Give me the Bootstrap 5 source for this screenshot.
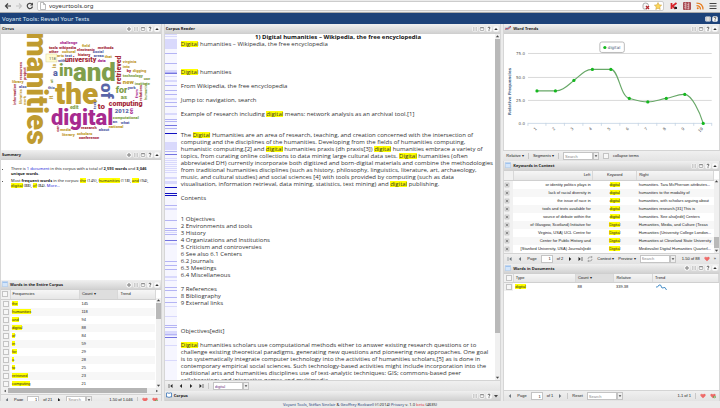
<!DOCTYPE html>
<html lang="en">
<head>
<meta charset="utf-8">
<meta name="viewport" content="width=device-width, initial-scale=1">
<title>Voyant Tools: Reveal Your Texts</title>
<link href="https://cdn.jsdelivr.net/npm/bootstrap@5.3.0/dist/css/bootstrap.min.css" rel="stylesheet">
<style>
body{font:4px/8px "Liberation Sans",Arial,sans-serif;color:#222;background:#ebebeb}
svg{display:block}
a{text-decoration:none;color:#2020d8}
button{background:none;border:0;padding:0;color:inherit;font:inherit;line-height:8px;white-space:nowrap}
input{font:inherit;color:inherit;min-width:0}
input[type=checkbox]{appearance:none;width:6px;height:6px;border:1px solid #c4c4c4;background:#f7f7f7;display:block;margin:1px auto}
.chrome-bar{height:13px;background:#ececec;padding:1px 3px 2px 4px;border-bottom:1px solid #aaa;gap:3px}
.chrome-bar svg,.omnibox svg{width:8px;height:8px;flex:none}
.addons{gap:5px;margin-left:3px}
.omnibox{background:#fff;border:1px solid #ccc;border-radius:2px;height:10px;padding:0 1px}
.omnibox input{border:0;background:none;padding:0;height:8px;font:6px/8px "Noto Sans",sans-serif;color:#333;outline:0;margin-left:-2px}
.brand-bar{height:11px;background:#1d4279;color:#dfe9f5;padding:0 2px;font:6px/10px "Noto Sans",sans-serif}
.workspace{gap:2px}
.col-a{flex:162 1 0}.col-b{flex:338 1 0}.col-c{flex:217 1 0}
.col-a,.col-b,.col-c{min-width:0;min-height:0}
.h-trend{flex:126 1 0;min-height:0}.h-sum{flex:130 1 0;min-height:0}.h-words{flex:121 1 0;min-height:0}.h-docs{flex:137 1 0;min-height:0}.h-read{flex:1 1 0;min-height:0}
.panel{border:solid #d6d6d6;border-width:0 1px;background:#fff;overflow:hidden}
.phead{height:10px;flex:none;background:linear-gradient(#f0f0f0,#d2d2d2);border-bottom:1px solid #cfcfcf;padding:0 1px;color:#222}
.phead h2{font:bold 4px/9px "Noto Sans",sans-serif;margin:0 auto 0 0;white-space:nowrap}
.phead h2 svg{display:inline-block;width:6px;height:6px;margin-right:2px;vertical-align:-1px}
.tools{gap:1px}
.tools svg{width:6px;height:6px}
.tbar{height:11px;flex:none;background:linear-gradient(#f0f0f0,#e3e3e3);border-top:1px solid #d4d4d4;padding:0 3px;gap:4px;white-space:nowrap;overflow:hidden}
.tbar svg{width:6px;height:6px;flex:none}
.tbar input[type=text]{border:1px solid #c4c4c4;background:#fff;height:8px;padding:0 1px;line-height:6px}
.tbar input::placeholder{color:#888}
.tbar .dd{width:6px;height:8px;border:1px solid #c4c4c4;background:#eee;flex:none}
.tbar .dd svg{width:4px;height:4px}
.pg{width:12px;text-align:right}.find{width:30px}
.tbar .sepline{width:1px;height:6px;background:#c8c8c8;flex:none}
.grid{table-layout:fixed;width:100%;margin:0;border-collapse:collapse;color:#222}
.grid th,.grid td{padding:0 2px;height:8px;line-height:8px;font-weight:400;white-space:nowrap;overflow:hidden}
.grid th{height:9px;background:linear-gradient(#f6f6f6,#e6e6e6);border-right:1px solid #d8d8d8;border-bottom:1px solid #d0d0d0}
.grid .sorted{background:#dedede}
.grid tbody tr:nth-child(even){background:#f7f7f7}
.grid th:first-child,.grid td:first-child{width:8px;padding:0;background:#f1f1f1}
.hl{background:#ff0;color:inherit;padding:0}
.reader .hl{display:inline-block;line-height:6px}
.summary-list .hl{display:inline-block;line-height:5px}
.sbar{width:5px;flex:none;background:#f0f0f0}
.sbar svg{width:5px;height:5px}
.thumb{background:#b9b9b9;width:5px}
.hbar{height:6px;flex:none;background:#f0f0f0;padding:0 2px}
.hbar .track{background:#b5b5b5;height:5px;flex:1;margin:0 8px 0 1px}
.hbar svg{width:4px;height:4px}
.summary-list{margin:0;padding:6px 6px 0 10px;font:4px/5px "Noto Sans",sans-serif}
.summary-list li{margin-bottom:2px}
.stripes{width:12px;height:100%;flex:none;background:#f6f6ff}
.reader{font:6px/7px "Open Sans","Noto Sans",sans-serif;color:#333;white-space:pre;padding-left:4px;overflow:hidden}
.reader h1{font:bold 6px/7px "Open Sans","Noto Sans",sans-serif;margin:0;text-align:center;color:#111}
.cloud{font-family:Roboto,sans-serif;font-weight:900}
.credits{height:7px;font:4px/7px "Noto Sans",sans-serif;color:#222;text-align:center;flex:none}
.credits a{color:#1d4279}
</style>
<script src="https://cdn.jsdelivr.net/npm/bootstrap@5.3.0/dist/js/bootstrap.bundle.min.js"></script>
</head>
<body>
<svg width="0" height="0" class="position-absolute" aria-hidden="true">
<defs>
<symbol id="gear" viewBox="0 0 12 12"><circle cx="6" cy="6" r="5.5" fill="#f8f8f8"/><circle cx="6" cy="6" r="2.4" fill="none" stroke="#777" stroke-width="1.600"/><path d="M6 2v8M2 6h8" stroke="#888" stroke-width="1"/></symbol>
<symbol id="out" viewBox="0 0 12 12"><rect x=".5" y="1" width="11" height="10" rx="2" fill="#f4f4f4"/><path d="M2 3.500h3M2 6h3M2 8.500h3M7 3.500h3M7 6h3M7 8.500h3" stroke="#999" stroke-width="1.200"/></symbol>
<symbol id="win" viewBox="0 0 12 12"><rect x=".5" y=".5" width="11" height="11" rx="3" fill="#f8f8f8"/><rect x="2.500" y="3" width="7" height="6" rx="1" fill="none" stroke="#888" stroke-width="1.200"/><path d="M2.500 3.500h7" stroke="#777" stroke-width="1.600"/></symbol>
<symbol id="ask" viewBox="0 0 12 12"><rect x=".5" y=".5" width="11" height="11" rx="3" fill="#fafafa"/><path d="M4 4.200q0-2 2-2t2 1.800q0 1-2 2.300v1M6 8.500v1.700" fill="none" stroke="#444" stroke-width="1.700"/></symbol>
<symbol id="up" viewBox="0 0 12 12"><rect x=".5" y=".5" width="11" height="11" rx="3" fill="#fafafa"/><path d="M2.500 8L6 4l3.500 4z" fill="#333"/></symbol>
<symbol id="down" viewBox="0 0 12 12"><path d="M2 4h8L6 9z" fill="#444"/></symbol>
<symbol id="upt" viewBox="0 0 12 12"><path d="M2 8h8L6 3z" fill="#444"/></symbol>
<symbol id="prev" viewBox="0 0 12 12"><path d="M8 2v8L3.500 6z" fill="currentColor"/></symbol>
<symbol id="next" viewBox="0 0 12 12"><path d="M4 2v8l4.500-4z" fill="currentColor"/></symbol>
<symbol id="first" viewBox="0 0 12 12"><path d="M2 2v8" stroke="currentColor" stroke-width="1.200"/><path d="M9 2v8L4.500 6z" fill="currentColor"/></symbol>
<symbol id="last" viewBox="0 0 12 12"><path d="M10 2v8" stroke="currentColor" stroke-width="1.200"/><path d="M3 2v8l4.500-4z" fill="currentColor"/></symbol>
<symbol id="sheet" viewBox="0 0 12 12"><rect x=".5" y=".5" width="11" height="11" rx="1" fill="#d3e5fa" stroke="#9dbde0"/><path d="M1 3h10" stroke="#9fc3ee" stroke-width="2"/></symbol>
<symbol id="heart" viewBox="0 0 14 12"><path d="M7 11L1 5.500Q0 1 4 1q2 0 3 2 1-2 3-2 4 0 3 4.500z" fill="#ee6a68"/><path d="M3 3.500q1-1 2 0" stroke="#fbb" fill="none"/></symbol>
<symbol id="heartplus" viewBox="0 0 14 12"><path d="M7 11L1 5.500Q0 1 4 1q2 0 3 2 1-2 3-2 4 0 3 4.500z" fill="#ee6a68"/><circle cx="10.500" cy="8.500" r="3" fill="#5b9a45"/><path d="M9 8.500h3M10.500 7v3" stroke="#fff"/></symbol>
<symbol id="plus" viewBox="0 0 12 12"><rect x="2" y="2" width="8" height="8" fill="#e4e4e4" stroke="#aaa"/><path d="M4 6h4M6 4v4" stroke="#555" stroke-width="1.500"/></symbol>
</defs>
</svg>
<div class="d-flex flex-column vh-100 overflow-hidden">
<header class="chrome-bar d-flex align-items-center">
<button aria-label="Back"><svg viewBox="0 0 16 16"><path d="M14 8H3M8 3L3 8l5 5" fill="none" stroke="#444" stroke-width="2.400"/></svg></button>
<button aria-label="Forward"><svg viewBox="0 0 16 16"><path d="M2 8h11M8 3l5 5-5 5" fill="none" stroke="#c4c4c4" stroke-width="2.200"/></svg></button>
<button aria-label="Reload"><svg viewBox="0 0 16 16"><path d="M13 9A5.300 5.300 0 1 1 11.500 4" fill="none" stroke="#444" stroke-width="2.400"/><path d="M14 1v6H8z" fill="#444"/></svg></button>
<div class="omnibox d-flex align-items-center flex-grow-1 gap-1">
<svg viewBox="0 0 16 16"><path d="M3 1h6l4 4v10H3zM9 1v4h4" fill="#fff" stroke="#999" stroke-width="1.300"/></svg>
<input class="flex-grow-1" type="text" aria-label="Address" value="voyeurtools.org">
<svg viewBox="0 0 16 16"><path d="M9 14H4q-2 0-2-3V6q0-4 5-4 6 0 6 5" fill="#f7f7f7" stroke="#999" stroke-width="1.600"/><path d="M8 8l6 6M14 8l-6 6" stroke="#b3262c" stroke-width="2.600"/></svg>
<svg viewBox="0 0 16 16"><path d="M8 1l2.200 4.700 5.100.6-3.800 3.500 1 5.200L8 12.400 3.500 15l1-5.200L.7 6.300l5.100-.6z" fill="#fbd65a" stroke="#c69b3a"/></svg>
</div>
<div class="addons d-flex">
<button aria-label="Kaspersky"><svg viewBox="0 0 16 16"><path d="M3 2v12M13 2L5 8l6 6" fill="none" stroke="#d8232a" stroke-width="3.500"/><path d="M9 9l5 1v4H9z" fill="#222"/></svg></button>
<button aria-label="Extension"><svg viewBox="0 0 16 16"><rect width="16" height="16" rx="2" fill="#a84b53"/><path d="M2 4q3-3 5 0t6 0M2 8q3-3 5 0t6 0M2 12q3-3 5 0t6 0M5 1v14M11 1v14" fill="none" stroke="#e5c5c8" stroke-width="1.200"/></svg></button>
<button aria-label="Feed"><svg viewBox="0 0 16 16"><circle cx="3.500" cy="12.500" r="2" fill="#e67e22"/><path d="M1 7q8 0 8 8M1 2q13 0 13 13" fill="none" stroke="#e67e22" stroke-width="2.500"/></svg></button>
<button aria-label="Menu"><svg viewBox="0 0 16 16"><path d="M1 3h14M1 8h14M1 13h14" stroke="#444" stroke-width="2.400"/></svg></button>
</div>
</header>
<div class="brand-bar d-flex align-items-center justify-content-between"><span>Voyant Tools: Reveal Your Texts</span>
<span class="tools d-flex"><button aria-label="Export"><svg><use href="#out"/></svg></button><button aria-label="Help"><svg><use href="#ask"/></svg></button></span></div>

<main class="workspace d-flex flex-grow-1 overflow-hidden">
<div class="col-a d-flex flex-column">
<section class="panel h-trend d-flex flex-column">
<div class="phead d-flex align-items-center"><h2>Cirrus</h2><span class="tools d-flex"><button aria-label="Options"><svg><use href="#gear"/></svg></button><button aria-label="Export"><svg><use href="#out"/></svg></button><button aria-label="Window"><svg><use href="#win"/></svg></button><button aria-label="Help"><svg><use href="#ask"/></svg></button><button aria-label="Collapse"><svg><use href="#up"/></svg></button></span></div>
<svg class="cloud h-read w-100" viewBox="1 34 160 115" preserveAspectRatio="xMinYMin meet">
<g fill="#bf9b30">
<text transform="translate(27 145) rotate(90)" text-anchor="end" font-size="29">humanities</text>
<text x="55" y="104" font-size="30">the</text>
<text x="82" y="47" font-size="4">field</text><text x="62" y="53" font-size="4">cultural</text><text x="57" y="57" font-size="4">arts</text><text x="105" y="58" font-size="4">that</text>
<text x="123" y="63" font-size="4">virginia</text><text x="123" y="68" font-size="4">into</text><text x="123" y="84" font-size="6">new</text><text x="133" y="72" font-size="4">digging</text>
<text x="60" y="131" font-size="4">media</text><text x="77" y="135" font-size="4">scholars</text><text x="62" y="136" font-size="4">literary</text><text x="109" y="128" font-size="4">national</text>
<text x="12" y="83" font-size="4">library</text><text transform="translate(56 68) rotate(-90)" font-size="5">is</text>
<text transform="translate(22 104) rotate(-90)" font-size="4">libraries</text><text transform="translate(26 105) rotate(-90)" font-size="4">work</text><text transform="translate(53 99) rotate(-90)" font-size="5">it</text>
</g>
<g fill="#7f9f4b">
<text x="73" y="81" font-size="26">and</text><text x="59" y="76" font-size="17">in</text><text x="116" y="93" font-size="9">for</text><text x="121" y="99" font-size="6">as</text>
<text x="123" y="77" font-size="4">technology</text><text x="135" y="85" font-size="4">institute</text><text x="113" y="119" font-size="4">computational</text><text x="70" y="109" font-size="5">edit</text><text x="144" y="80" font-size="4">use</text>
<text transform="translate(147 100) rotate(-90)" font-size="4">humanist</text><text transform="translate(53 83) rotate(-90)" font-size="4">at</text>
</g>
<g fill="#a72a8f"><text x="51" y="125" font-size="22">digital</text><text x="60" y="44" font-size="4">challenge</text><text x="98" y="62" font-size="4">data</text><text transform="translate(133 114) rotate(-90)" font-size="5">on</text><text transform="translate(138 98) rotate(-90)" font-size="4">from</text></g>
<g fill="#5965a8"><text transform="translate(101 83) rotate(90)" font-size="17">of</text><text x="53" y="76" font-size="9">a</text><text x="115" y="113" font-size="6">2012</text><text x="93" y="53" font-size="4">social</text><text x="94" y="57" font-size="4">areas</text><text x="65" y="57" font-size="4">text</text><text x="58" y="62" font-size="4">with</text><text x="99" y="131" font-size="4">about</text><text x="113" y="123" font-size="4">an</text><text x="121" y="124" font-size="4">what</text><text x="48" y="89" font-size="4">this</text><text x="19" y="88" font-size="4">also</text><text x="128" y="89" font-size="4">york</text><text transform="translate(96 109) rotate(-90)" font-size="4">text</text></g>
<g fill="#a52a3a"><text x="65" y="62" font-size="7">university</text><text x="109" y="106" font-size="7">computing</text><text x="98" y="109" font-size="8">to</text><text transform="translate(121 84) rotate(-90)" font-size="7">retrieved</text>
<text x="49" y="49" font-size="4">tools</text><text x="59" y="49" font-size="4">wikipedia</text><text x="77" y="51" font-size="4">electronic</text><text x="98" y="49" font-size="4">methods</text><text x="78" y="56" font-size="4">history</text><text x="49" y="53" font-size="4">other</text><text x="81" y="129" font-size="4">research</text><text x="79" y="139" font-size="4">conference</text><text x="127" y="72" font-size="4">by</text>
<text transform="translate(16 105) rotate(-90)" font-size="4">information</text><text transform="translate(22 80) rotate(-90)" font-size="4">resources</text><text transform="translate(26 80) rotate(-90)" font-size="4">project</text><text transform="translate(142 101) rotate(-90)" font-size="4">relations</text><text transform="translate(59 132) rotate(-90)" font-size="4">can</text></g>
<rect x="46" y="54" width="11" height="8" fill="#fffbd0" stroke="#d9d29b" stroke-width=".5"/><text x="49" y="60" font-size="4" font-weight="400" fill="#555">118</text>
</svg>
</section>
<section class="panel h-sum d-flex flex-column">
<div class="phead d-flex align-items-center"><h2>Summary</h2><span class="tools d-flex"><button aria-label="Options"><svg><use href="#gear"/></svg></button><button aria-label="Export"><svg><use href="#out"/></svg></button><button aria-label="Window"><svg><use href="#win"/></svg></button><button aria-label="Help"><svg><use href="#ask"/></svg></button><button aria-label="Collapse"><svg><use href="#up"/></svg></button></span></div>
<ul class="summary-list">
<li>There is <a href="#">1 document</a> in this corpus with a total of <b>2,593 words</b> and <b>3,046<br>unique words</b>.</li>
<li>Most <b>frequent words</b> in the corpus: <mark class="hl">the</mark> (145), <mark class="hl">humanities</mark> (118), <mark class="hl">and</mark> (94),<br><mark class="hl">digital</mark> (88), <mark class="hl">of</mark> (84). <a href="#">More...</a></li>
</ul>
</section>
<section class="panel h-words d-flex flex-column">
<div class="phead d-flex align-items-center"><h2><svg><use href="#sheet"/></svg>Words in the Entire Corpus</h2><span class="tools d-flex"><button aria-label="Options"><svg><use href="#gear"/></svg></button><button aria-label="Export"><svg><use href="#out"/></svg></button><button aria-label="Window"><svg><use href="#win"/></svg></button><button aria-label="Help"><svg><use href="#ask"/></svg></button><button aria-label="Collapse"><svg><use href="#up"/></svg></button></span></div>
<div class="d-flex">
<table class="grid flex-grow-1">
<colgroup><col style="width:9px"><col style="width:45%"><col style="width:25%"><col></colgroup>
<thead><tr><th><input type="checkbox" aria-label="Select all"></th><th>Frequencies</th><th class="sorted">Count ▾</th><th>Trend</th></tr></thead>
<tbody>
<tr><td><input type="checkbox" aria-label="the"></td><td><mark class="hl">the</mark></td><td>145</td><td></td></tr>
<tr><td><input type="checkbox" aria-label="humanities"></td><td><mark class="hl">humanities</mark></td><td>118</td><td></td></tr>
<tr><td><input type="checkbox" aria-label="and"></td><td><mark class="hl">and</mark></td><td>94</td><td></td></tr>
<tr><td><input type="checkbox" aria-label="digital"></td><td><mark class="hl">digital</mark></td><td>88</td><td></td></tr>
<tr><td><input type="checkbox" aria-label="of"></td><td><mark class="hl">of</mark></td><td>84</td><td></td></tr>
<tr><td><input type="checkbox" aria-label="in"></td><td><mark class="hl">in</mark></td><td>59</td><td></td></tr>
<tr><td><input type="checkbox" aria-label="for"></td><td><mark class="hl">for</mark></td><td>29</td><td></td></tr>
<tr><td><input type="checkbox" aria-label="a"></td><td><mark class="hl">a</mark></td><td>28</td><td></td></tr>
<tr><td><input type="checkbox" aria-label="to"></td><td><mark class="hl">to</mark></td><td>25</td><td></td></tr>
<tr><td><input type="checkbox" aria-label="retrieved"></td><td><mark class="hl">retrieved</mark></td><td>23</td><td></td></tr>
<tr><td><input type="checkbox" aria-label="computing"></td><td><mark class="hl">computing</mark></td><td>21</td><td></td></tr>
</tbody></table>
<div class="sbar d-flex flex-column mt-2"><svg><use href="#upt"/></svg><div class="thumb flex-grow-1"></div><div style="flex:4 1 0"></div><svg><use href="#down"/></svg></div>
</div>
<div class="hbar d-flex align-items-center"><svg><use href="#prev"/></svg><div class="track"></div><svg><use href="#next"/></svg></div>
<div class="tbar d-flex align-items-center"><button aria-label="Previous" class="text-secondary"><svg><use href="#prev"/></svg></button><label for="pa">Page</label><input id="pa" class="pg" type="text" value="1"><span>of 21</span><button aria-label="Next"><svg><use href="#next"/></svg></button><span class="d-flex"><input type="text" style="width:20px" placeholder="Search" aria-label="Search words"><button class="dd" aria-label="Search options"><svg><use href="#down"/></svg></button></span><span class="ms-auto">1-50 of 1,046</span><span class="sepline"></span><button aria-label="Favourite"><svg><use href="#heart"/></svg></button><button aria-label="Add favourite"><svg><use href="#heartplus"/></svg></button></div>
</section>
</div>

<div class="col-b d-flex flex-column">
<section class="panel h-read d-flex flex-column">
<div class="phead d-flex align-items-center"><h2>Corpus Reader</h2><span class="tools d-flex"><button aria-label="Export"><svg><use href="#out"/></svg></button><button aria-label="Window"><svg><use href="#win"/></svg></button><button aria-label="Help"><svg><use href="#ask"/></svg></button><button aria-label="Collapse"><svg><use href="#up"/></svg></button></span></div>
<div class="d-flex h-read">
<svg class="stripes" viewBox="0 34 12 346" preserveAspectRatio="none" stroke="none">
<path fill="#d9d9fc" d="M0 39h12v10H0zM0 34h12v1H0zM0 36h12v1H0zM0 70h12v2H0zM0 76h12v1H0zM0 80h12v2H0zM0 98h12v2H0zM0 113h12v2H0zM0 142h12v8H0zM0 158h12v1H0zM0 160h12v1H0zM0 162h12v1H0zM0 164h12v1H0zM0 166h12v1H0zM0 168h12v1H0zM0 170h12v1H0zM0 172h12v1H0zM0 177h12v2H0zM0 181h12v3H0zM0 208h12v2H0zM0 232h12v1H0zM0 243h12v2H0zM0 276h12v2H0zM0 280h12v1H0zM0 306h12v1H0zM0 316h12v1H0zM0 331h12v5H0zM0 345h12v1H0zM0 360h12v1H0z"/>
<path fill="#b4b4f4" d="M0 53h12v1H0zM0 63h12v1H0zM0 72h12v1H0zM0 85h12v1H0zM0 90h12v1H0zM0 94h12v1H0zM0 102h12v1H0zM0 106h12v1H0zM0 119h12v1H0zM0 121h12v1H0zM0 128h12v1H0zM0 151h12v1H0zM0 205h12v1H0zM0 220h12v1H0zM0 228h12v1H0zM0 230h12v1H0zM0 234h12v1H0zM0 261h12v1H0zM0 265h12v1H0zM0 269h12v1H0zM0 287h12v1H0zM0 290h12v1H0zM0 297h12v1H0zM0 302h12v1H0zM0 325h12v1H0zM0 327h12v1H0zM0 334h12v1H0z"/>
<path fill="#7474e0" d="M0 73h12v1H0zM0 125h12v1H0zM0 154h12v1H0zM0 240h12v1H0zM0 337h12v1H0z"/>
<path fill="#1010c0" d="M0 133h12v1H0zM0 187h12v1H0zM0 193h12v1H0zM0 195h12v1H0z"/>
</svg>
<article class="reader flex-grow-1"><h1>1) Digital humanities – Wikipedia, the free encyclopedia</h1><mark class="hl">Digital</mark> humanities – Wikipedia, the free encyclopedia



<mark class="hl">Digital</mark> humanities

From Wikipedia, the free encyclopedia

Jump to: navigation, search

Example of research including <mark class="hl">digital</mark> means: network analysis as an archival tool.[1]


The <mark class="hl">Digital</mark> Humanities are an area of research, teaching, and creation concerned with the intersection of
computing and the disciplines of the humanities. Developing from the fields of humanities computing,
humanistic computing,[2] and <mark class="hl">digital</mark> humanities praxis (dh praxis[3]) <mark class="hl">digital</mark> humanities embrace a variety of
topics, from curating online collections to data mining large cultural data sets. <mark class="hl">Digital</mark> humanities (often
abbreviated DH) currently incorporate both digitized and born-digital materials and combine the methodologies
from traditional humanities disciplines (such as history, philosophy, linguistics, literature, art, archaeology,
music, and cultural studies) and social sciences [4] with tools provided by computing (such as data
visualisation, information retrieval, data mining, statistics, text mining) and <mark class="hl">digital</mark> publishing.

Contents


1 Objectives
2 Environments and tools
3 History
4 Organizations and Institutions
5 Criticism and controversies
6 See also 6.1 Centers
6.2 Journals
6.3 Meetings
6.4 Miscellaneous

7 References
8 Bibliography
9 External links



Objectives[edit]

<mark class="hl">Digital</mark> humanities scholars use computational methods either to answer existing research questions or to
challenge existing theoretical paradigms, generating new questions and pioneering new approaches. One goal
is to systematically integrate computer technology into the activities of humanities scholars,[5] as is done in
contemporary empirical social sciences. Such technology-based activities might include incorporation into the
traditional arts and humanities disciplines use of text-analytic techniques: GIS; commons-based peer
collaboration; and interactive games and multimedia.</article>
<div class="sbar d-flex flex-column"><svg><use href="#upt"/></svg><div class="thumb" style="flex:7 1 0"></div><div class="flex-grow-1"></div><svg><use href="#down"/></svg></div>
</div>
<div class="tbar d-flex align-items-center"><button aria-label="First"><svg><use href="#first"/></svg></button><button aria-label="Previous"><svg><use href="#prev"/></svg></button><button aria-label="Next"><svg><use href="#next"/></svg></button><button aria-label="Last"><svg><use href="#last"/></svg></button><span class="sepline"></span><span class="d-flex"><input type="text" class="find" style="color:#704080" value="digital" aria-label="Search term"><button class="dd" aria-label="Term options"><svg><use href="#down"/></svg></button></span></div>
</section>
<section class="panel">
<div class="phead d-flex align-items-center"><h2><svg viewBox="0 0 12 12"><path d="M1 2q3-1 5 1 2-2 5-1v8q-3-1-5 1-2-2-5-1z" fill="#fff" stroke="#2f6db5" stroke-width="1.500"/></svg>Corpus</h2><span class="tools d-flex"><button aria-label="Export"><svg><use href="#out"/></svg></button><button aria-label="Window"><svg><use href="#win"/></svg></button><button aria-label="Help"><svg><use href="#ask"/></svg></button><button aria-label="Expand"><svg><use href="#down"/></svg></button></span></div>
</section>
</div>

<div class="col-c d-flex flex-column">
<section class="panel h-trend d-flex flex-column">
<div class="phead d-flex align-items-center"><h2><svg viewBox="0 0 12 12"><path d="M0 9l4-3 3 2 5-6" fill="none" stroke="#d33" stroke-width="2"/><path d="M0 5l4 5 4-7 4 3" fill="none" stroke="#58b" stroke-width="1.500"/></svg>Word Trends</h2><span class="tools d-flex"><button aria-label="Export"><svg><use href="#out"/></svg></button><button aria-label="Window"><svg><use href="#win"/></svg></button><button aria-label="Help"><svg><use href="#ask"/></svg></button><button aria-label="Collapse"><svg><use href="#up"/></svg></button></span></div>
<svg class="h-read w-100" viewBox="504 34 215 115" preserveAspectRatio="xMinYMin meet" font-family="DejaVu Sans,sans-serif">
<path d="M528 53.500h184M528 77.500h184M528 100.500h184" stroke="#d9d9d9" fill="none"/>
<path d="M528 123.500h184M528 123v3M546 123v3M564.500 123v3M583 123v3M601.500 123v3M620 123v3M638.500 123v3M657 123v3M675.500 123v3M694 123v3M712 123v3" stroke="#c3d3e3" stroke-width=".8" fill="none"/>
<g font-size="4" fill="#555" text-anchor="end"><text x="525" y="55">75.0</text><text x="525" y="79">50.0</text><text x="525" y="102">25.0</text><text x="525" y="125">0.0</text></g>
<text transform="translate(511 115) rotate(-90)" font-size="4" font-weight="bold" fill="#4d6a8c">Relative Frequencies</text>
<path d="M537 91H555.500C563 91 567 86 574 80.500S585 69.500 592.500 69.500H611C619 69.500 620 96 629.500 98.500C635 100 641 102 648 102S660 99.500 666.500 98.500 678 94 685 94.500C692 95 700 112 703.500 123.500" fill="none" stroke="#68a868" stroke-width="1.200"/>
<g fill="#14b81e"><circle cx="537" cy="91" r="1.600"/><circle cx="555.500" cy="91" r="1.600"/><circle cx="574" cy="80.500" r="1.600"/><circle cx="592.500" cy="69.500" r="1.600"/><circle cx="611" cy="69.500" r="1.600"/><circle cx="629.500" cy="98.500" r="1.600"/><circle cx="648" cy="102" r="1.600"/><circle cx="666.500" cy="98.500" r="1.600"/><circle cx="685" cy="94.500" r="1.600"/><circle cx="703.500" cy="123.500" r="1.600"/></g>
<rect x="600" y="42" width="24.500" height="10.500" rx="2" fill="#fff" stroke="#aaa" stroke-width=".8"/><circle cx="605" cy="47.500" r="1.600" fill="#14b81e"/><text x="608" y="49" font-size="4" fill="#3e576f">digital</text>
<g font-size="4" fill="#555" text-anchor="end"><text transform="translate(537 129) rotate(-45)">1</text><text transform="translate(555.500 129) rotate(-45)">2</text><text transform="translate(574 129) rotate(-45)">3</text><text transform="translate(592.500 129) rotate(-45)">4</text><text transform="translate(611 129) rotate(-45)">5</text><text transform="translate(629.500 129) rotate(-45)">6</text><text transform="translate(648 129) rotate(-45)">7</text><text transform="translate(666.500 129) rotate(-45)">8</text><text transform="translate(685 129) rotate(-45)">9</text><text transform="translate(703.500 129) rotate(-45)">10</text></g>
</svg>
</section>
<div class="tbar d-flex align-items-center"><button>Relative ▾</button><span class="sepline"></span><button>Segments ▾</button><span class="sepline"></span><span class="d-flex"><input type="text" class="find" placeholder="Search" aria-label="Search trends"><button class="dd" aria-label="Search options"><svg><use href="#down"/></svg></button></span><input type="checkbox" class="mx-0" id="collapse"><label for="collapse">collapse terms</label></div>
<section class="panel d-flex flex-column">
<div class="phead d-flex align-items-center"><h2><svg><use href="#sheet"/></svg>Keywords in Context</h2><span class="tools d-flex"><button aria-label="Export"><svg><use href="#out"/></svg></button><button aria-label="Window"><svg><use href="#win"/></svg></button><button aria-label="Help"><svg><use href="#ask"/></svg></button><button aria-label="Collapse"><svg><use href="#up"/></svg></button></span></div>
<div class="d-flex">
<table class="grid flex-grow-1">
<colgroup><col style="width:9px"><col style="width:38%"><col style="width:21%"><col></colgroup>
<thead><tr><th></th><th class="text-end">Left</th><th class="text-center">Keyword</th><th>Right</th></tr></thead>
<tbody>
<tr><td><svg width="6" height="6"><use href="#plus"/></svg></td><td class="text-end">or identity politics plays in</td><td class="text-center"><mark class="hl">digital</mark></td><td>humanities. Tara McPherson attributes...</td></tr>
<tr><td><svg width="6" height="6"><use href="#plus"/></svg></td><td class="text-end">lack of racial diversity in</td><td class="text-center"><mark class="hl">digital</mark></td><td>humanities to the modality of</td></tr>
<tr><td><svg width="6" height="6"><use href="#plus"/></svg></td><td class="text-end">the issue of race in</td><td class="text-center"><mark class="hl">digital</mark></td><td>humanities, with scholars arguing about</td></tr>
<tr><td><svg width="6" height="6"><use href="#plus"/></svg></td><td class="text-end">tools and texts available for</td><td class="text-center"><mark class="hl">digital</mark></td><td>humanities research.[31] This is</td></tr>
<tr><td><svg width="6" height="6"><use href="#plus"/></svg></td><td class="text-end">source of debate within the</td><td class="text-center"><mark class="hl">digital</mark></td><td>humanities. See also[edit] Centers</td></tr>
<tr><td><svg width="6" height="6"><use href="#plus"/></svg></td><td class="text-end">of Glasgow, Scotland) Initiative for</td><td class="text-center"><mark class="hl">Digital</mark></td><td>Humanities, Media, and Culture (Texas</td></tr>
<tr><td><svg width="6" height="6"><use href="#plus"/></svg></td><td class="text-end">Virginia, USA) UCL Centre for</td><td class="text-center"><mark class="hl">Digital</mark></td><td>Humanities (University College London...</td></tr>
<tr><td><svg width="6" height="6"><use href="#plus"/></svg></td><td class="text-end">Center for Public History and</td><td class="text-center"><mark class="hl">Digital</mark></td><td>Humanities at Cleveland State University</td></tr>
<tr><td><svg width="6" height="6"><use href="#plus"/></svg></td><td class="text-end">[Stanford University, USA) Journals[edit</td><td class="text-center"><mark class="hl">Digital</mark></td><td>Medievalist Digital Humanities Quarterl...</td></tr>
</tbody></table>
<div class="sbar d-flex flex-column mt-2"><svg><use href="#upt"/></svg><div style="flex:5 1 0"></div><div class="thumb flex-grow-1"></div><svg><use href="#down"/></svg></div>
</div>
<div class="tbar d-flex align-items-center"><button aria-label="First" class="text-secondary"><svg><use href="#first"/></svg></button><button aria-label="Previous" class="text-secondary"><svg><use href="#prev"/></svg></button><label for="pb">Page</label><input id="pb" class="pg" type="text" value="1"><span>of 2</span><button aria-label="Next"><svg><use href="#next"/></svg></button><button aria-label="Last"><svg><use href="#last"/></svg></button><button aria-label="Refresh"><svg viewBox="0 0 12 12"><path d="M2 6q0-4 4-4h3M10 6q0 4-4 4H3M8 0l2.500 2L8 4M4 8l-2.500 2L4 12" fill="none" stroke="#888" stroke-width="1.300"/></svg></button><button>Context ▾</button><button>Preview ▾</button><span class="d-flex"><input type="text" class="find" placeholder="Search" aria-label="Search contexts"><button class="dd" aria-label="Search options"><svg><use href="#down"/></svg></button></span><span class="ms-auto">1-50 of 88</span><button aria-label="Favourite"><svg><use href="#heart"/></svg></button><button aria-label="More">»</button></div>
</section>
<section class="panel h-docs d-flex flex-column">
<div class="phead d-flex align-items-center"><h2><svg><use href="#sheet"/></svg>Words in Documents</h2><span class="tools d-flex"><button aria-label="Options"><svg><use href="#gear"/></svg></button><button aria-label="Export"><svg><use href="#out"/></svg></button><button aria-label="Window"><svg><use href="#win"/></svg></button><button aria-label="Help"><svg><use href="#ask"/></svg></button><button aria-label="Collapse"><svg><use href="#up"/></svg></button></span></div>
<table class="grid">
<colgroup><col style="width:9px"><col style="width:29%"><col style="width:18%"><col style="width:18%"><col></colgroup>
<thead><tr><th><input type="checkbox" aria-label="Select all documents"></th><th>Type</th><th class="sorted">Count ▾</th><th>Relative</th><th>Trend</th></tr></thead>
<tbody><tr><td><input type="checkbox" aria-label="digital row"></td><td><mark class="hl">digital</mark></td><td>88</td><td>339.38</td><td><svg width="12" height="7" viewBox="0 0 12 7"><path d="M1 3h1.500L4 1h1.500L7 4l3-.5 1.500 2.500" fill="none" stroke="#4a90c8"/></svg></td></tr></tbody></table>
<div class="tbar d-flex align-items-center mt-auto"><button aria-label="Previous" class="text-secondary"><svg><use href="#prev"/></svg></button><label for="pc">Page</label><input id="pc" class="pg" type="text" value="1"><span>of 1</span><button aria-label="Next" class="text-secondary"><svg><use href="#next"/></svg></button><span class="sepline"></span><button>Reset</button><span class="d-flex"><input type="text" class="find" placeholder="Search" aria-label="Search documents"><button class="dd" aria-label="Search options"><svg><use href="#down"/></svg></button></span><span class="ms-auto">1-1 of 1</span><span class="sepline"></span><button aria-label="Favourite"><svg><use href="#heart"/></svg></button><button aria-label="Add favourite"><svg><use href="#heartplus"/></svg></button></div>
</section>
</div>
</main>
<footer class="credits"><a href="#">Voyant Tools</a>, <a href="#">Stéfan Sinclair</a> &amp; <a href="#">Geoffrey Rockwell</a> (©2014) <a href="#">Privacy</a> v. 1.0 <span class="text-danger">beta</span> (4635)</footer>
</div>
</body>
</html>
